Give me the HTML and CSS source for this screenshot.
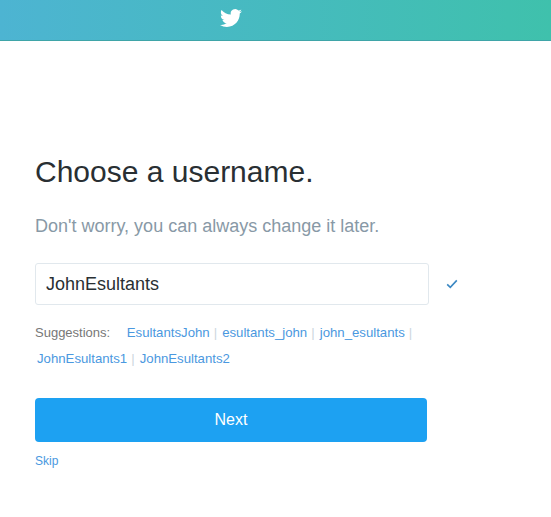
FILE: index.html
```html
<!DOCTYPE html>
<html lang="en">
<head>
  <meta charset="UTF-8">
  <meta name="viewport" content="width=device-width, initial-scale=1.0">
  <title>Choose a username</title>
  <link rel="stylesheet" href="styles.css">
</head>
<body>
  <header class="topbar">
    <svg class="bird" viewBox="0 0 24 24" aria-hidden="true">
      <path d="M23.95 4.57a10 10 0 0 1-2.82.77 4.96 4.96 0 0 0 2.16-2.72c-.95.55-2 .96-3.13 1.19a4.92 4.92 0 0 0-8.38 4.48C7.69 8.1 4.07 6.13 1.64 3.16a4.82 4.82 0 0 0-.66 2.47c0 1.71.87 3.21 2.19 4.1a4.9 4.9 0 0 1-2.23-.62v.06a4.92 4.92 0 0 0 3.95 4.83 4.9 4.9 0 0 1-2.21.08 4.94 4.94 0 0 0 4.6 3.42A9.87 9.87 0 0 1 0 19.54a13.94 13.94 0 0 0 7.55 2.21c9.06 0 14-7.5 14-13.98 0-.21 0-.42-.01-.63.96-.69 1.8-1.56 2.46-2.55z"/>
    </svg>
  </header>

  <main class="content">
    <h1>Choose a username.</h1>
    <p class="sub">Don't worry, you can always change it later.</p>

    <div class="field-row">
      <input class="field" type="text" value="JohnEsultants">
      <svg class="check" viewBox="0 0 12 10" aria-hidden="true">
        <path d="M1.2 5.4 4.3 8.4 10.8 1.4"/>
      </svg>
    </div>

    <div class="suggestions">
      <span class="sug-label">Suggestions:</span>
      <a href="#">EsultantsJohn</a><span class="sep">|</span>
      <a href="#">esultants_john</a><span class="sep">|</span>
      <a href="#">john_esultants</a><span class="sep">|</span>
      <br>
      <a href="#" class="wrap">JohnEsultants1</a><span class="sep">|</span>
      <a href="#">JohnEsultants2</a>
    </div>

    <button class="next" type="button">Next</button>
    <a href="#" class="skip">Skip</a>
  </main>
</body>
</html>
```

FILE: styles.css
```css
* { box-sizing: border-box; }
body {
  margin: 0;
  background: #fff;
  color: #292f33;
  font-family: "Liberation Sans", Arial, sans-serif;
  overflow: hidden;
}
a { color: #4a98e0; text-decoration: none; }

.topbar {
  height: 41px;
  padding: 7px 0 0 220px;
  background: linear-gradient(to right, #4db4d2, #3fc1ac);
  border-bottom: 1px solid #3fa5a8;
}
.bird {
  display: block;
  width: 22px;
  height: 22px;
  fill: #fff;
}

.content { padding: 0 35px; }
h1 {
  margin: 114px 0 0;
  font-size: 30px;
  line-height: 34px;
  font-weight: 400;
}
.sub {
  margin: 26px 0 0;
  font-size: 18px;
  line-height: 22px;
  color: #8899a6;
}

.field-row {
  margin-top: 26px;
  display: flex;
  align-items: center;
}
.field {
  width: 394px;
  height: 42px;
  padding: 0 10px;
  border: 1px solid #e1e8ed;
  border-radius: 3px;
  font: 18px "Liberation Sans", Arial, sans-serif;
  color: #292f33;
}
.check {
  width: 12px;
  height: 10px;
  margin-left: 17px;
  fill: none;
  stroke: #3b88c3;
  stroke-width: 1.6;
}

.suggestions {
  margin-top: 15px;
  font-size: 13px;
  line-height: 26px;
  white-space: nowrap;
}
.sug-label { color: #777; margin-right: 13px; }
.suggestions a { font-size: 13.2px; }
.sep { color: #ccd6dd; margin: 0 1.5px 0 4px; }
.wrap { margin-left: 2px; }

.next {
  display: block;
  width: 392px;
  height: 44px;
  margin-top: 26px;
  border: none;
  border-radius: 4px;
  background: #1da1f2;
  color: #fff;
  font: 16px "Liberation Sans", Arial, sans-serif;
}
.skip {
  display: block;
  margin-top: 12px;
  font-size: 12px;
  line-height: 14px;
}
```
